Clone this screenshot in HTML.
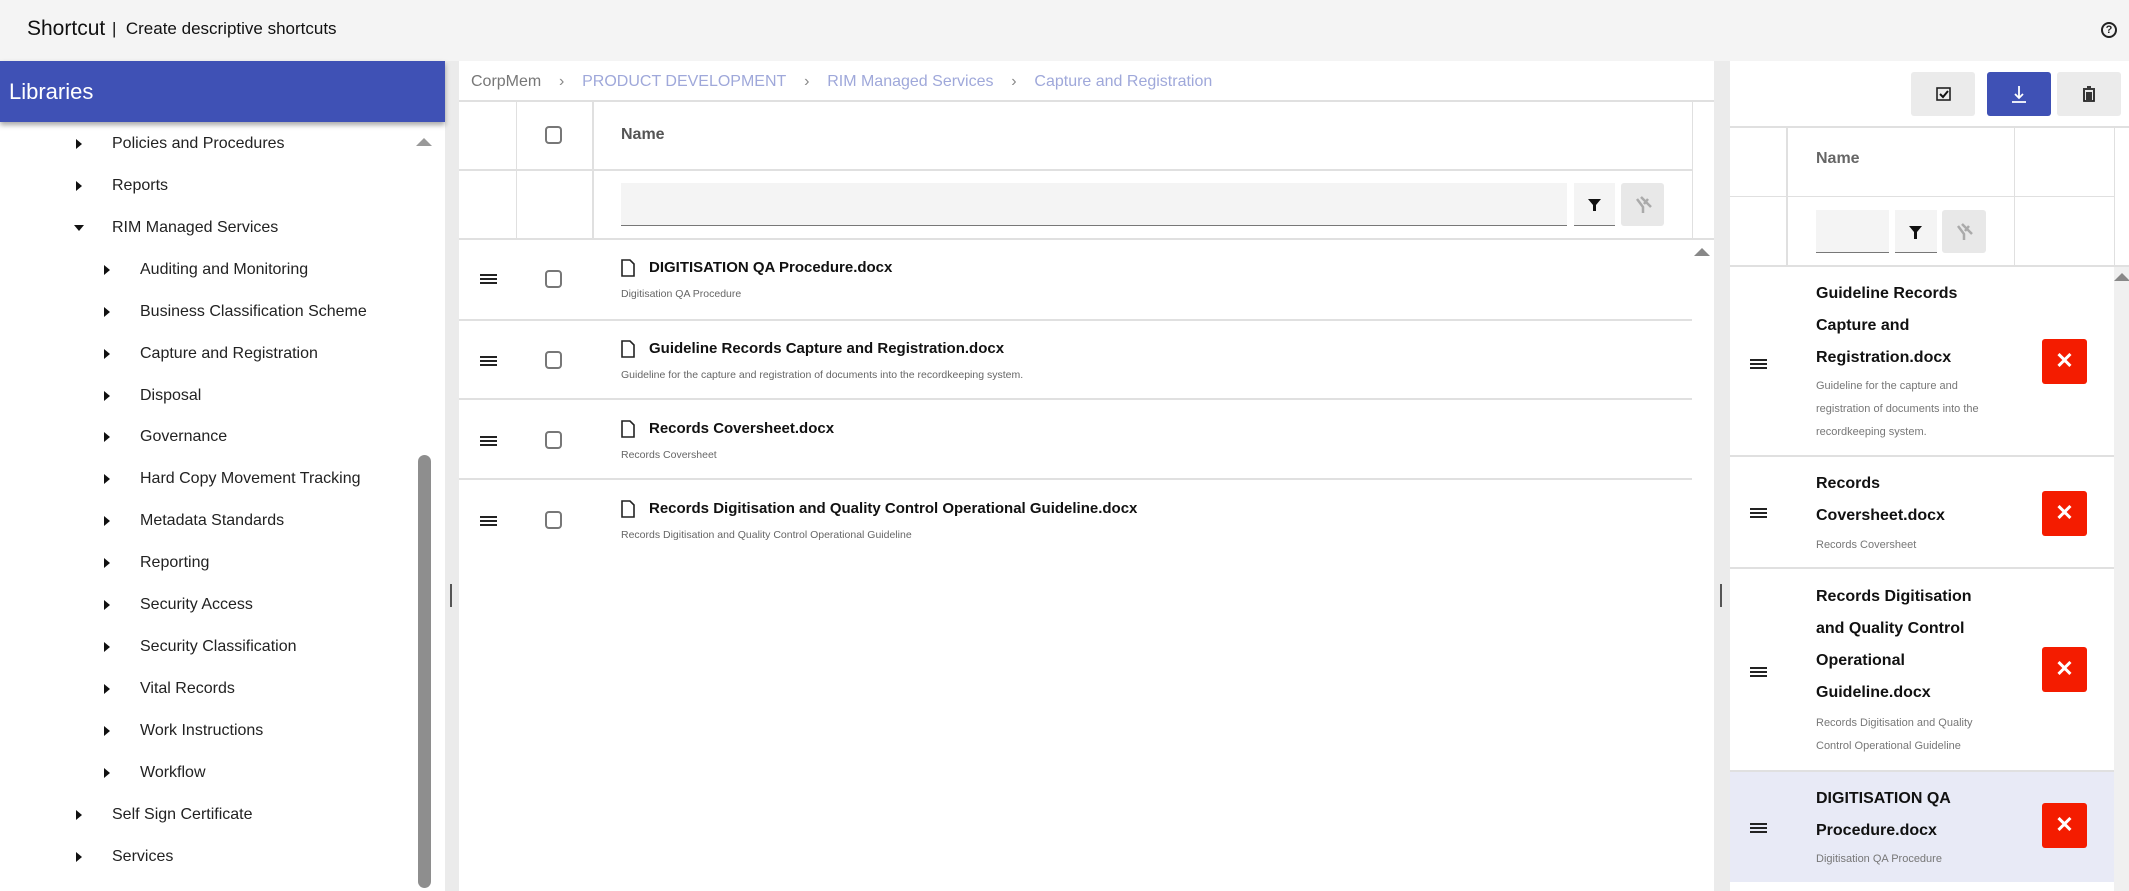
<!DOCTYPE html>
<html><head><meta charset="utf-8">
<style>
*{box-sizing:border-box;margin:0;padding:0}
body{width:2129px;height:891px;overflow:hidden;background:#ebebeb;font-family:"Liberation Sans",Arial,sans-serif;position:relative;color:#222}
.a{position:absolute}
.top{left:0;top:0;width:2129px;height:61px;background:#f4f4f4}
.left{left:0;top:61px;width:445px;height:830px;background:#fff}
.lib{left:0;top:61px;width:445px;height:61px;background:#3f51b5;box-shadow:0 3px 5px rgba(0,0,0,.35);color:#fff;font-size:22px;line-height:61px;padding-left:9px}
.ti{font-size:16px;color:#222;line-height:20px}
.tri{width:0;height:0;border-top:5px solid transparent;border-bottom:5px solid transparent;border-left:6px solid #111}
.trd{width:0;height:0;border-left:5px solid transparent;border-right:5px solid transparent;border-top:6px solid #111}
.center{left:459px;top:61px;width:1255px;height:830px;background:#fff}
.right{left:1730px;top:61px;width:399px;height:830px;background:#fff}
.bc{font-size:16px;color:#9fa8da}
.hl{background:#e0e0e0}
.cb{width:17px;height:18px;border:2px solid #777;border-radius:4px;background:#fff}
.menu{width:17px;height:10px;border-top:2px solid #222;border-bottom:2px solid #222}
.menu:after{content:"";position:absolute;left:0;top:2px;width:17px;height:2px;background:#222}
.t1{font-size:15px;font-weight:bold;color:#111}
.s1{font-size:10.5px;color:#666}
.rt{font-size:16px;font-weight:bold;color:#111;line-height:32px;width:166px}
.rs{font-size:11px;color:#777;line-height:23px;width:172px}
.x{width:45px;height:45px;background:#f41c00;border-radius:3px;color:#fff;font-size:22px;font-weight:bold;text-align:center;line-height:44px}
.up{width:0;height:0;border-left:8px solid transparent;border-right:8px solid transparent;border-bottom:8px solid #888}
</style></head><body>
<div class="a top"></div>
<div class="a" style="left:27px;top:17px;font-size:21px;color:#111">Shortcut</div>
<div class="a" style="left:112px;top:19px;font-size:17px;color:#111">|&nbsp; Create descriptive shortcuts</div>
<div class="a" style="left:2101px;top:22px;width:16px;height:16px;border:2px solid #222;border-radius:50%;font-size:11px;font-weight:bold;text-align:center;line-height:12px">?</div>

<div class="a left"></div>
<div class="a lib">Libraries</div>
<div class="a" style="left:418px;top:455px;width:13px;height:433px;background:#8e8e8e;border-radius:7px"></div>
<div class="a up" style="left:416px;top:138px;border-bottom-color:#999"></div>

<div class="a tri" style="left:76px;top:139px"></div><div class="a ti" style="left:112px;top:134px">Policies and Procedures</div>
<div class="a tri" style="left:76px;top:181px"></div><div class="a ti" style="left:112px;top:176px">Reports</div>
<div class="a trd" style="left:74px;top:225px"></div><div class="a ti" style="left:112px;top:218px">RIM Managed Services</div>
<div class="a tri" style="left:104px;top:265px"></div><div class="a ti" style="left:140px;top:260px">Auditing and Monitoring</div>
<div class="a tri" style="left:104px;top:307px"></div><div class="a ti" style="left:140px;top:302px">Business Classification Scheme</div>
<div class="a tri" style="left:104px;top:349px"></div><div class="a ti" style="left:140px;top:344px">Capture and Registration</div>
<div class="a tri" style="left:104px;top:391px"></div><div class="a ti" style="left:140px;top:386px">Disposal</div>
<div class="a tri" style="left:104px;top:432px"></div><div class="a ti" style="left:140px;top:427px">Governance</div>
<div class="a tri" style="left:104px;top:474px"></div><div class="a ti" style="left:140px;top:469px">Hard Copy Movement Tracking</div>
<div class="a tri" style="left:104px;top:516px"></div><div class="a ti" style="left:140px;top:511px">Metadata Standards</div>
<div class="a tri" style="left:104px;top:558px"></div><div class="a ti" style="left:140px;top:553px">Reporting</div>
<div class="a tri" style="left:104px;top:600px"></div><div class="a ti" style="left:140px;top:595px">Security Access</div>
<div class="a tri" style="left:104px;top:642px"></div><div class="a ti" style="left:140px;top:637px">Security Classification</div>
<div class="a tri" style="left:104px;top:684px"></div><div class="a ti" style="left:140px;top:679px">Vital Records</div>
<div class="a tri" style="left:104px;top:726px"></div><div class="a ti" style="left:140px;top:721px">Work Instructions</div>
<div class="a tri" style="left:104px;top:768px"></div><div class="a ti" style="left:140px;top:763px">Workflow</div>
<div class="a tri" style="left:76px;top:810px"></div><div class="a ti" style="left:112px;top:805px">Self Sign Certificate</div>
<div class="a tri" style="left:76px;top:852px"></div><div class="a ti" style="left:112px;top:847px">Services</div>

<div class="a" style="left:450px;top:584px;width:2px;height:23px;background:#555"></div>

<div class="a center"></div>
<div class="a bc" style="left:471px;top:73px"><span style="color:#777">CorpMem</span>&nbsp;&nbsp;&nbsp; <span style="color:#888">›</span>&nbsp;&nbsp;&nbsp; PRODUCT DEVELOPMENT&nbsp;&nbsp;&nbsp; <span style="color:#888">›</span>&nbsp;&nbsp;&nbsp; RIM Managed Services&nbsp;&nbsp;&nbsp; <span style="color:#888">›</span>&nbsp;&nbsp;&nbsp; Capture and Registration</div>
<div class="a hl" style="left:459px;top:100px;width:1255px;height:2px"></div>
<div class="a hl" style="left:459px;top:169px;width:1233px;height:2px"></div>
<div class="a hl" style="left:459px;top:238px;width:1255px;height:2px"></div>
<div class="a hl" style="left:516px;top:102px;width:1px;height:136px"></div>
<div class="a hl" style="left:592px;top:102px;width:2px;height:136px"></div>
<div class="a hl" style="left:1692px;top:102px;width:1px;height:136px"></div>
<div class="a cb" style="left:545px;top:126px"></div>
<div class="a" style="left:621px;top:126px;font-size:16px;font-weight:bold;color:#555">Name</div>
<div class="a" style="left:621px;top:183px;width:946px;height:43px;background:#f4f4f4;border-bottom:1px solid #777"></div>
<div class="a" style="left:1574px;top:183px;width:41px;height:43px;background:#f4f4f4;border-bottom:1px solid #777">
<svg width="41" height="42"><path d="M14 16h13l-5 6v6h-3v-6z" fill="#111"/></svg></div>
<div class="a" style="left:1621px;top:183px;width:43px;height:43px;background:#e8e8e8;border-radius:3px">
<svg width="43" height="43"><path d="M16 16l6 8v6M27 16l-4 5M20 14l10 10" stroke="#aaa" stroke-width="2.5" fill="none"/></svg></div>
<div class="a up" style="left:1694px;top:248px"></div>

<div class="a hl" style="left:459px;top:319px;width:1233px;height:2px"></div>
<div class="a hl" style="left:459px;top:398px;width:1233px;height:2px"></div>
<div class="a hl" style="left:459px;top:478px;width:1233px;height:2px"></div>

<div class="a menu" style="left:480px;top:274px"></div><div class="a cb" style="left:545px;top:270px"></div>
<svg class="a" style="left:621px;top:259px" width="14" height="18"><path d="M1 1h8l4 4v12H1z" fill="none" stroke="#222" stroke-width="1.6"/></svg>
<div class="a t1" style="left:649px;top:259px">DIGITISATION QA Procedure.docx</div>
<div class="a s1" style="left:621px;top:288px">Digitisation QA Procedure</div>

<div class="a menu" style="left:480px;top:356px"></div><div class="a cb" style="left:545px;top:351px"></div>
<svg class="a" style="left:621px;top:340px" width="14" height="18"><path d="M1 1h8l4 4v12H1z" fill="none" stroke="#222" stroke-width="1.6"/></svg>
<div class="a t1" style="left:649px;top:340px">Guideline Records Capture and Registration.docx</div>
<div class="a s1" style="left:621px;top:369px">Guideline for the capture and registration of documents into the recordkeeping system.</div>

<div class="a menu" style="left:480px;top:436px"></div><div class="a cb" style="left:545px;top:431px"></div>
<svg class="a" style="left:621px;top:420px" width="14" height="18"><path d="M1 1h8l4 4v12H1z" fill="none" stroke="#222" stroke-width="1.6"/></svg>
<div class="a t1" style="left:649px;top:420px">Records Coversheet.docx</div>
<div class="a s1" style="left:621px;top:449px">Records Coversheet</div>

<div class="a menu" style="left:480px;top:516px"></div><div class="a cb" style="left:545px;top:511px"></div>
<svg class="a" style="left:621px;top:500px" width="14" height="18"><path d="M1 1h8l4 4v12H1z" fill="none" stroke="#222" stroke-width="1.6"/></svg>
<div class="a t1" style="left:649px;top:500px">Records Digitisation and Quality Control Operational Guideline.docx</div>
<div class="a s1" style="left:621px;top:529px">Records Digitisation and Quality Control Operational Guideline</div>

<div class="a" style="left:1720px;top:584px;width:2px;height:23px;background:#555"></div>

<div class="a right"></div>
<div class="a" style="left:1911px;top:72px;width:64px;height:44px;background:#ebebeb;border-radius:3px">
<svg width="64" height="44"><rect x="26" y="16" width="13" height="12" fill="none" stroke="#222" stroke-width="1.6"/><path d="M29 22l3 3 5-6" stroke="#111" stroke-width="2" fill="none"/></svg></div>
<div class="a" style="left:1987px;top:72px;width:64px;height:44px;background:#3f51b5;border-radius:3px">
<svg width="64" height="44"><path d="M32 14v12M28 22l4 4 4-4M25 30h14" stroke="#fff" stroke-width="1.8" fill="none"/></svg></div>
<div class="a" style="left:2057px;top:72px;width:64px;height:44px;background:#ebebeb;border-radius:3px">
<svg width="64" height="44"><path d="M26 17h12M30 15h4M27 18v11h10V18M30 20v8M32 20v8M34 20v8" stroke="#222" stroke-width="1.8" fill="none"/></svg></div>
<div class="a hl" style="left:1730px;top:126px;width:399px;height:2px"></div>
<div class="a hl" style="left:1730px;top:196px;width:384px;height:1px"></div>
<div class="a hl" style="left:1730px;top:265px;width:399px;height:2px"></div>
<div class="a hl" style="left:1786px;top:128px;width:2px;height:137px"></div>
<div class="a hl" style="left:2014px;top:128px;width:1px;height:137px"></div>
<div class="a hl" style="left:2114px;top:128px;width:1px;height:137px"></div>
<div class="a" style="left:1816px;top:150px;font-size:16px;font-weight:bold;color:#666">Name</div>
<div class="a" style="left:1816px;top:210px;width:73px;height:43px;background:#f4f4f4;border-bottom:1px solid #777"></div>
<div class="a" style="left:1895px;top:210px;width:42px;height:43px;background:#f4f4f4;border-bottom:1px solid #777">
<svg width="42" height="42"><path d="M14 16h13l-5 6v7h-3v-7z" fill="#111"/></svg></div>
<div class="a" style="left:1942px;top:210px;width:44px;height:43px;background:#e8e8e8;border-radius:3px">
<svg width="44" height="43"><path d="M16 16l6 8v6M27 16l-4 5M20 14l10 10" stroke="#aaa" stroke-width="2.5" fill="none"/></svg></div>

<div class="a" style="left:2114px;top:267px;width:15px;height:624px;background:#f0f0f0"></div>
<div class="a up" style="left:2114px;top:273px"></div>

<div class="a menu" style="left:1750px;top:359px"></div>
<div class="a rt" style="left:1816px;top:278px">Guideline Records Capture and Registration.docx</div>
<div class="a rs" style="left:1816px;top:375px">Guideline for the capture and registration of documents into the recordkeeping system.</div>
<div class="a x" style="left:2042px;top:339px">✕</div>
<div class="a hl" style="left:1730px;top:455px;width:384px;height:2px"></div>

<div class="a menu" style="left:1750px;top:508px"></div>
<div class="a rt" style="left:1816px;top:468px">Records Coversheet.docx</div>
<div class="a rs" style="left:1816px;top:534px">Records Coversheet</div>
<div class="a x" style="left:2042px;top:491px">✕</div>
<div class="a hl" style="left:1730px;top:567px;width:384px;height:2px"></div>

<div class="a menu" style="left:1750px;top:667px"></div>
<div class="a rt" style="left:1816px;top:581px">Records Digitisation and Quality Control Operational Guideline.docx</div>
<div class="a rs" style="left:1816px;top:712px">Records Digitisation and Quality Control Operational Guideline</div>
<div class="a x" style="left:2042px;top:647px">✕</div>

<div class="a" style="left:1730px;top:770px;width:384px;height:112px;background:#e8eaf6;border-top:2px solid #e0e0e0"></div>
<div class="a menu" style="left:1750px;top:823px"></div>
<div class="a rt" style="left:1816px;top:783px">DIGITISATION QA Procedure.docx</div>
<div class="a rs" style="left:1816px;top:848px">Digitisation QA Procedure</div>
<div class="a x" style="left:2042px;top:803px">✕</div>
</body></html>
